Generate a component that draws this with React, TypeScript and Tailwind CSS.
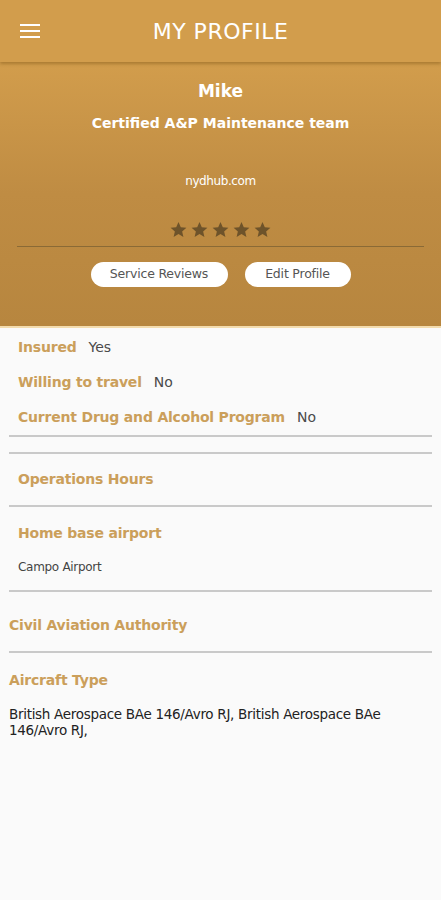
import React from 'react';

const font = { fontFamily: '"DejaVu Sans", "Open Sans", sans-serif' };

const Star = () => (
  <svg width="19" height="19" viewBox="0 0 24 24" className="fill-[#6e532a]">
    <path d="M12 2.5l2.9 6.6 7.1.6-5.4 4.7 1.6 7-6.2-3.7-6.2 3.7 1.6-7L2 9.7l7.1-.6z" />
  </svg>
);

const Divider = () => <div className="mx-[9px] h-[2px] bg-[#c9c9c9]" />;

const InfoRow = ({ label, value }: { label: string; value: string }) => (
  <div className="flex items-center h-[35px] pl-[18px]">
    <span className="text-[14px] font-semibold text-[#cb9f5b] tracking-[-0.2px]">{label}</span>
    <span className="ml-[12px] text-[14px] text-[#4a4a4a]">{value}</span>
  </div>
);

const App: React.FC = () => {
  return (
    <div className="w-[441px] min-h-[900px] bg-[#fafafa]" style={font}>
      {/* Top bar */}
      <div className="relative h-[62px] bg-[#d29d4c] flex items-center justify-center shadow-[0_2px_3px_rgba(120,80,20,0.45)] z-10">
        <div className="absolute left-[20px] top-[24px] flex flex-col gap-[4px]">
          <span className="block w-[20px] h-[2px] bg-white" />
          <span className="block w-[20px] h-[2px] bg-white" />
          <span className="block w-[20px] h-[2px] bg-white" />
        </div>
        <h1 className="text-[22px] text-white tracking-[0.5px]">MY PROFILE</h1>
      </div>

      {/* Profile card */}
      <div className="h-[266px] bg-gradient-to-b from-[#d29d4c] via-[#bf8c43] to-[#b7863f] flex flex-col items-center border-b-2 border-[#f3dcae]">
        <div className="mt-[17px] text-[17px] font-bold text-white">Mike</div>
        <div className="mt-[8px] text-[14px] font-semibold text-white tracking-[0px]">Certified A&amp;P Maintenance team</div>
        <div className="mt-[38px] text-[12px] text-white tracking-[-0.4px]">nydhub.com</div>
        <div className="mt-[30px] flex gap-[2px]">
          <Star />
          <Star />
          <Star />
          <Star />
          <Star />
        </div>
        <div className="mt-[7px] w-[407px] h-[1px] bg-[#8a6a36]" />
        <div className="mt-[15px] flex gap-[17px]">
          <button className="h-[25px] w-[137px] rounded-full bg-white text-[12.5px] text-[#555] tracking-[-0.2px]">Service Reviews</button>
          <button className="h-[25px] w-[106px] rounded-full bg-white text-[12.5px] text-[#555] tracking-[-0.2px]">Edit Profile</button>
        </div>
      </div>

      {/* Details */}
      <div className="pt-[2px]">
        <InfoRow label="Insured" value="Yes" />
        <InfoRow label="Willing to travel" value="No" />
        <InfoRow label="Current Drug and Alcohol Program" value="No" />
        <Divider />
        <div className="mt-[15px]">
          <Divider />
        </div>
        <div className="h-[51px] flex items-center pl-[18px] text-[14px] font-semibold text-[#cb9f5b] tracking-[-0.2px]">Operations Hours</div>
        <Divider />
        <div className="h-[51px] flex items-center pl-[18px] pt-[2px] text-[14px] font-semibold text-[#cb9f5b] tracking-[-0.2px]">Home base airport</div>
        <div className="pl-[18px] h-[18px] flex items-center text-[12px] text-[#444] tracking-[-0.3px]">Campo Airport</div>
        <div className="mt-[14px]">
          <Divider />
        </div>
        <div className="h-[59px] flex items-center pl-[9px] pt-[8px] text-[14px] font-semibold text-[#cb9f5b] tracking-[-0.2px]">Civil Aviation Authority</div>
        <Divider />
        <div className="h-[51px] flex items-center pl-[9px] pt-[4px] text-[14px] font-semibold text-[#cb9f5b] tracking-[-0.2px]">Aircraft Type</div>
        <div className="mt-[2px] px-[9px] text-[13.5px] leading-[16px] text-[#222] tracking-[-0.3px]">
          British Aerospace BAe 146/Avro RJ, British Aerospace BAe 146/Avro RJ,
        </div>
      </div>
    </div>
  );
};

export default App;
